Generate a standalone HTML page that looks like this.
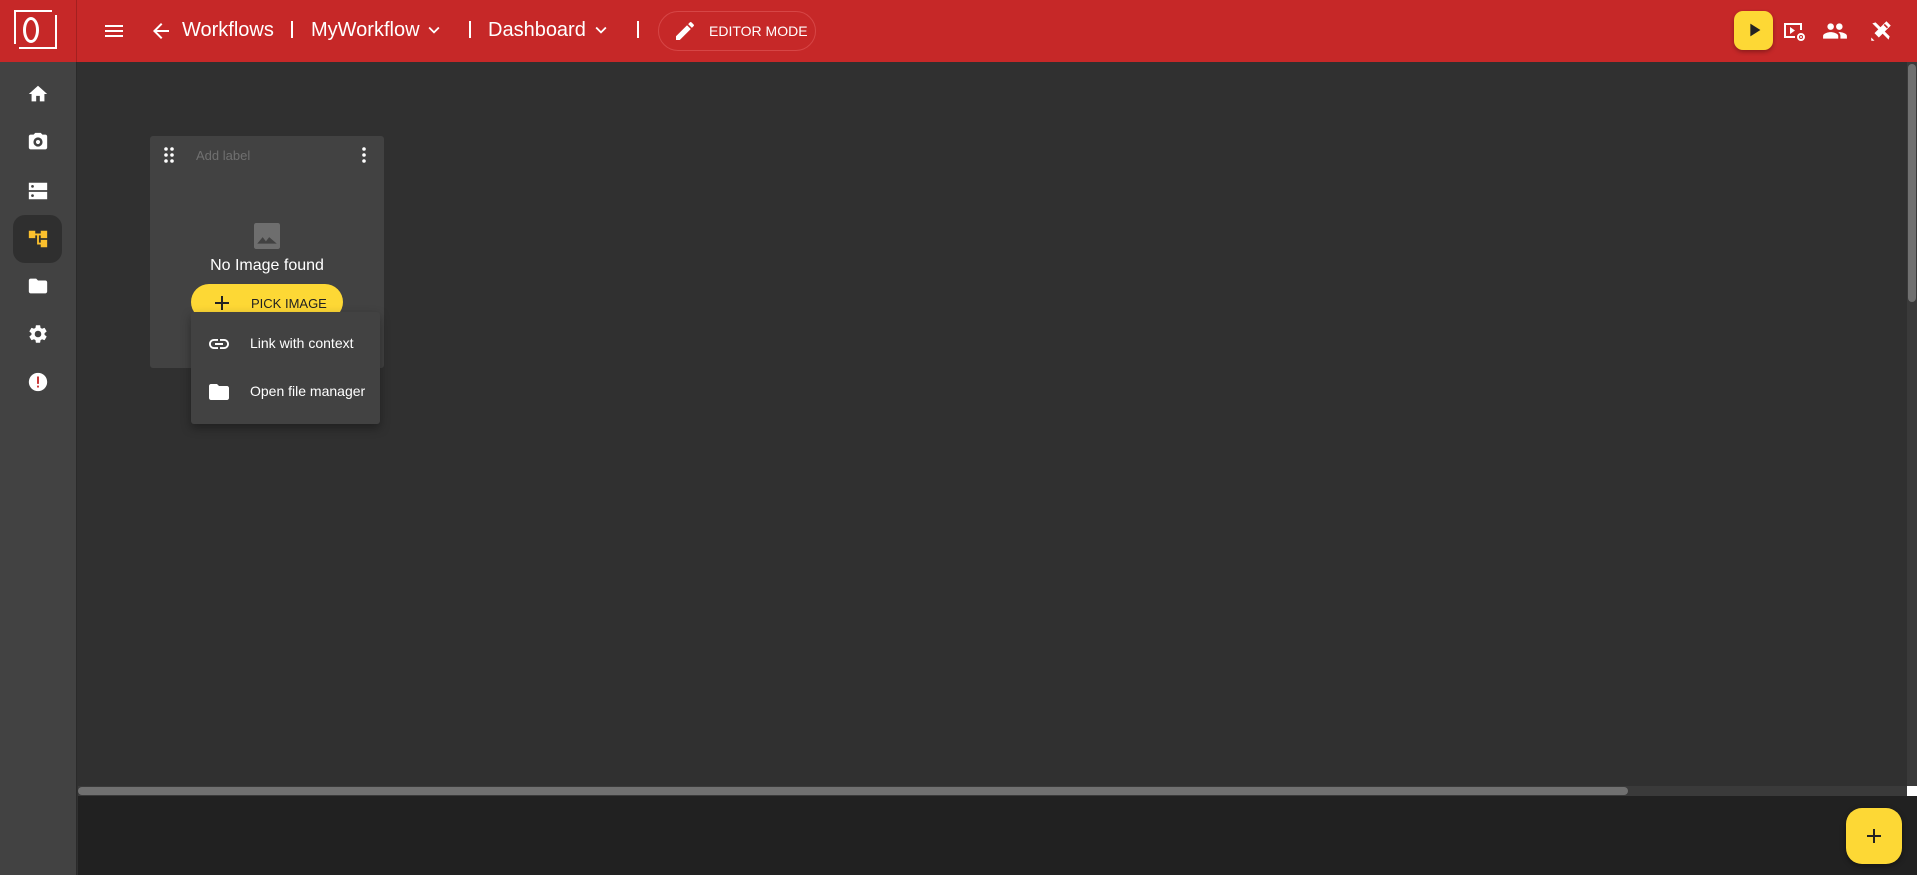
<!DOCTYPE html>
<html><head><meta charset="utf-8"><style>
*{box-sizing:border-box;margin:0;padding:0}
body{width:1917px;height:875px;overflow:hidden;background:#303030;font-family:"Liberation Sans",Roboto,sans-serif;position:relative;color:#fff}
.abs{position:absolute}
.hdr{left:0;top:0;width:1917px;height:62px;background:#c62828}
.side{left:0;top:62px;width:77px;height:813px;background:#424242;border-right:1px solid #2a2a2a}
.t{font-size:20px;color:#fff;top:19px;white-space:nowrap}
.sep{width:2px;height:17px;background:#fff;top:21px}
svg{display:block}
.w{background:#fff}
</style></head><body>
<div class="abs hdr"></div>
<div class="abs" style="left:76px;top:0;width:1px;height:62px;background:#a32020"></div>
<!-- logo -->
<div class="abs w" style="left:14px;top:10px;width:38px;height:2px"></div>
<div class="abs w" style="left:55px;top:15px;width:2px;height:34px"></div>
<div class="abs w" style="left:19px;top:47px;width:38px;height:2px"></div>
<div class="abs w" style="left:14px;top:10px;width:2px;height:34px"></div>
<div class="abs" style="left:23px;top:17px;width:16px;height:26px;border:3px solid #fff;border-radius:50%"></div>
<!-- hamburger -->
<svg class="abs" style="left:102px;top:19px" width="24" height="24" viewBox="0 0 24 24"><path fill="#fff" d="M3 18h18v-2H3v2zm0-5h18v-2H3v2zm0-7v2h18V6H3z"/></svg>
<svg class="abs" style="left:149px;top:19px" width="24" height="24" viewBox="0 0 24 24"><path fill="#fff" d="M20 11H7.83l5.59-5.59L12 4l-8 8 8 8 1.41-1.41L7.83 13H20v-2z"/></svg>
<div class="abs t" style="left:182px">Workflows</div>
<div class="abs sep" style="left:291px"></div>
<div class="abs t" style="left:311px">MyWorkflow</div>
<svg class="abs" style="left:423px;top:19px" width="22" height="22" viewBox="0 0 24 24"><path fill="#fff" d="M7.41 8.59L12 13.17l4.59-4.58L18 10l-6 6-6-6z"/></svg>
<div class="abs sep" style="left:469px"></div>
<div class="abs t" style="left:488px">Dashboard</div>
<svg class="abs" style="left:590px;top:19px" width="22" height="22" viewBox="0 0 24 24"><path fill="#fff" d="M7.41 8.59L12 13.17l4.59-4.58L18 10l-6 6-6-6z"/></svg>
<div class="abs sep" style="left:637px"></div>
<div class="abs" style="left:658px;top:11px;width:158px;height:40px;border:1px solid #d64646;border-radius:20px"></div>
<svg class="abs" style="left:673px;top:19px" width="24" height="24" viewBox="0 0 24 24"><path fill="#fff" d="M3 17.25V21h3.75L17.81 9.94l-3.75-3.75L3 17.25zM20.71 7.04a1 1 0 000-1.41l-2.34-2.34a1 1 0 00-1.41 0l-1.83 1.83 3.75 3.75 1.83-1.83z"/></svg>
<div class="abs" style="left:709px;top:23px;font-size:14px;color:#fff">EDITOR MODE</div>
<!-- right icons -->
<div class="abs" style="left:1734px;top:11px;width:39px;height:39px;background:#fdd835;border-radius:9px;box-shadow:0 2px 4px rgba(0,0,0,.3)"></div>
<svg class="abs" style="left:1743px;top:19px" width="22" height="22" viewBox="0 0 24 24"><path fill="#222" d="M8 5v14l11-7z"/></svg>
<svg class="abs" style="left:1782px;top:19px" width="24" height="24" viewBox="0 0 24 24"><path fill="none" stroke="#fff" stroke-width="2" d="M13 18H3V5h16v6"/><path fill="#fff" d="M8 8v7l5-3.5z"/><circle cx="19" cy="18" r="3" fill="none" stroke="#fff" stroke-width="2"/><circle cx="19" cy="18" r="1" fill="#fff"/></svg>
<svg class="abs" style="left:1822px;top:18px" width="26" height="26" viewBox="0 0 24 24"><path fill="#fff" d="M16 11c1.66 0 2.99-1.34 2.99-3S17.660 5 16 5c-1.66 0-3 1.34-3 3s1.34 3 3 3zm-8 0c1.66 0 2.99-1.34 2.99-3S9.66 5 8 5C6.34 5 5 6.34 5 8s1.34 3 3 3zm0 2c-2.33 0-7 1.17-7 3.5V19h14v-2.5c0-2.330-4.67-3.5-7-3.5zm8 0c-.29 0-.62.02-.97.05 1.16.84 1.97 1.97 1.97 3.45V19h6v-2.5c0-2.33-4.67-3.5-7-3.5z"/></svg>
<svg class="abs" style="left:1868px;top:18px" width="26" height="26" viewBox="0 0 24 24"><path fill="#fff" d="M4 5l3-1 13 13-1 3zM17 3l4 4-11 11-4-4zM3 18l3 3H3z"/><path stroke="#c62828" stroke-width="1.5" d="M15 6l3 3"/></svg>
<!-- sidebar -->
<div class="abs side"></div>
<div class="abs" style="left:13px;top:215px;width:49px;height:48px;background:#2f2f2f;border-radius:12px"></div>
<svg class="abs" style="left:27px;top:83px" width="22" height="22" viewBox="0 0 24 24"><path fill="#fff" d="M10 20v-6h4v6h5v-8h3L12 3 2 12h3v8z"/></svg>
<svg class="abs" style="left:27px;top:131px" width="22" height="22" viewBox="0 0 24 24"><path fill="#fff" d="M9 2L7.17 4H4c-1.1 0-2 .9-2 2v12c0 1.1.9 2 2 2h16c1.1 0 2-.9 2-2V6c0-1.1-.9-2-2-2h-3.17L15 2H9zm3 15a5 5 0 110-10 5 5 0 010 10z"/><circle cx="12" cy="12" r="3" fill="#fff" stroke="#424242" stroke-width="1.5"/></svg>
<svg class="abs" style="left:27px;top:180px" width="22" height="22" viewBox="0 0 24 24"><path fill="#fff" d="M2 3h20v8H2zM2 13h20v8H2z"/><circle cx="6" cy="7" r="1.5" fill="#424242"/><circle cx="6" cy="17" r="1.5" fill="#424242"/></svg>
<svg class="abs" style="left:27px;top:228px" width="22" height="22" viewBox="0 0 24 24"><path fill="#fbc02d" d="M22 11V3h-7v3H9V3H2v8h7V8h2v10h4v3h7v-8h-7v3h-2V8h2v3z"/></svg>
<svg class="abs" style="left:27px;top:275px" width="22" height="22" viewBox="0 0 24 24"><path fill="#fff" d="M10 4H4c-1.1 0-2 .9-2 2v12c0 1.1.9 2 2 2h16c1.1 0 2-.9 2-2V8c0-1.1-.9-2-2-2h-8l-2-2z"/></svg>
<svg class="abs" style="left:27px;top:323px" width="22" height="22" viewBox="0 0 24 24"><path fill="#fff" d="M19.14 12.94a7.1 7.1 0 000-1.88l2.03-1.58a.49.49 0 00.12-.61l-1.92-3.32a.49.49 0 00-.59-.22l-2.39.96a7 7 0 00-1.62-.94l-.36-2.54a.48.48 0 00-.48-.41h-3.84a.48.48 0 00-.47.41l-.36 2.54c-.59.24-1.13.57-1.62.94l-2.39-.96a.49.49 0 00-.59.22L2.74 8.870a.48.48 0 00.12.61l2.03 1.58a7.1 7.1 0 000 1.88l-2.03 1.58a.49.49 0 00-.12.61l1.92 3.32c.12.22.37.29.59.22l2.39-.96c.5.38 1.03.7 1.62.94l.36 2.54c.05.24.24.41.48.41h3.84c.24 0 .44-.17.47-.41l.36-2.54c.59-.24 1.13-.56 1.62-.94l2.39.96c.22.08.47 0 .59-.22l1.92-3.32a.48.48 0 00-.12-.61l-2.01-1.58zM12 15.6a3.6 3.6 0 110-7.2 3.6 3.6 0 010 7.2z"/></svg>
<svg class="abs" style="left:27px;top:371px" width="22" height="22" viewBox="0 0 24 24"><circle cx="12" cy="12" r="10" fill="#fff"/><path fill="#c62828" d="M11 6h2v8h-2zM11 16h2v2h-2z"/></svg>
<!-- card -->
<div class="abs" style="left:150px;top:136px;width:234px;height:232px;background:#424242;border-radius:3px"></div>
<svg class="abs" style="left:163px;top:147px" width="12" height="16" viewBox="0 0 12 16"><g fill="#fff"><circle cx="3" cy="2" r="1.8"/><circle cx="9" cy="2" r="1.8"/><circle cx="3" cy="8" r="1.8"/><circle cx="9" cy="8" r="1.8"/><circle cx="3" cy="14" r="1.8"/><circle cx="9" cy="14" r="1.8"/></g></svg>
<div class="abs" style="left:196px;top:148px;font-size:13px;color:#707070">Add label</div>
<svg class="abs" style="left:361px;top:147px" width="6" height="16" viewBox="0 0 6 16"><g fill="#fff"><circle cx="3" cy="2" r="1.8"/><circle cx="3" cy="8" r="1.8"/><circle cx="3" cy="14" r="1.8"/></g></svg>
<svg class="abs" style="left:254px;top:223px" width="26" height="26" viewBox="0 0 24 24"><rect x="0" y="0" width="24" height="24" rx="2" fill="#6e6e6e"/><path fill="#424242" d="M3 19l5-6 3 4 3-4 7 6z"/></svg>
<div class="abs" style="left:150px;top:257px;width:234px;text-align:center;font-size:16px;color:#fff">No Image found</div>
<div class="abs" style="left:191px;top:284px;width:152px;height:36px;background:#fdd835;border-radius:18px"></div>
<svg class="abs" style="left:210px;top:291px" width="24" height="24" viewBox="0 0 24 24"><path fill="#222" d="M19 13h-6v6h-2v-6H5v-2h6V5h2v6h6v2z"/></svg>
<div class="abs" style="left:251px;top:296px;font-size:13px;color:#222">PICK IMAGE</div>
<!-- menu -->
<div class="abs" style="left:191px;top:312px;width:189px;height:112px;background:#424242;border-radius:3px;box-shadow:0 4px 10px rgba(0,0,0,.35)"></div>
<svg class="abs" style="left:207px;top:332px" width="24" height="24" viewBox="0 0 24 24"><path fill="#fff" d="M3.9 12c0-1.71 1.39-3.1 3.1-3.1h4V7H7c-2.76 0-5 2.24-5 5s2.24 5 5 5h4v-1.9H7c-1.71 0-3.1-1.39-3.1-3.1zM8 13h8v-2H8v2zm9-6h-4v1.9h4c1.71 0 3.1 1.39 3.1 3.1s-1.39 3.1-3.1 3.1h-4V17h4c2.76 0 5-2.24 5-5s-2.24-5-5-5z"/></svg>
<div class="abs" style="left:250px;top:335px;font-size:14px;color:#fff">Link with context</div>
<svg class="abs" style="left:207px;top:380px" width="24" height="24" viewBox="0 0 24 24"><path fill="#fff" d="M10 4H4c-1.1 0-2 .9-2 2v12c0 1.1.9 2 2 2h16c1.1 0 2-.9 2-2V8c0-1.1-.9-2-2-2h-8l-2-2z"/></svg>
<div class="abs" style="left:250px;top:383px;font-size:14px;color:#fff">Open file manager</div>
<!-- scrollbars -->
<div class="abs" style="left:1907px;top:62px;width:10px;height:724px;background:#3a3a3a"></div>
<div class="abs" style="left:1908px;top:64px;width:8px;height:238px;background:#707070;border-radius:4px"></div>
<div class="abs" style="left:78px;top:786px;width:1829px;height:10px;background:#3a3a3a"></div>
<div class="abs" style="left:78px;top:787px;width:1550px;height:8px;background:#707070;border-radius:4px"></div>
<div class="abs" style="left:1907px;top:786px;width:10px;height:10px;background:#fff"></div>
<div class="abs" style="left:78px;top:796px;width:1839px;height:79px;background:#212121"></div>
<!-- fab -->
<div class="abs" style="left:1846px;top:808px;width:56px;height:56px;background:#fdd835;border-radius:16px;box-shadow:0 2px 6px rgba(0,0,0,.4)"></div>
<svg class="abs" style="left:1862px;top:824px" width="24" height="24" viewBox="0 0 24 24"><path fill="#222" d="M19 13h-6v6h-2v-6H5v-2h6V5h2v6h6v2z"/></svg>
</body></html>
